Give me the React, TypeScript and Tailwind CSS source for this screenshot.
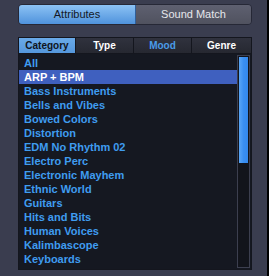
import React from "react";

const items = [
  "All",
  "ARP + BPM",
  "Bass Instruments",
  "Bells and Vibes",
  "Bowed Colors",
  "Distortion",
  "EDM No Rhythm 02",
  "Electro Perc",
  "Electronic Mayhem",
  "Ethnic World",
  "Guitars",
  "Hits and Bits",
  "Human Voices",
  "Kalimbascope",
  "Keyboards",
];

export default function App() {
  return (
    <div
      className="w-[269px] h-[276px] bg-[#3a3d4f] flex overflow-hidden"
      style={{ fontFamily: '"Liberation Sans", Arial, sans-serif' }}
    >
      <div className="w-[267px] h-full flex flex-col">
        {/* segmented control */}
        <div className="mt-[4px] ml-[18px] w-[234px] h-[21px] rounded-[4px] border border-[#262836] flex overflow-hidden">
          <div className="w-[117px] h-full bg-gradient-to-b from-[#8cc2f4] to-[#4f93dc] border-r border-[#2f5f9a] flex items-center justify-center text-[11px] text-[#141826]">
            Attributes
          </div>
          <div className="flex-1 h-full bg-gradient-to-b from-[#5e6070] to-[#50525f] flex items-center justify-center text-[11px] text-[#e6e7ec]">
            Sound Match
          </div>
        </div>

        {/* panel */}
        <div className="mt-[12px] ml-[18px] w-[234px] h-[233px] border border-[#14161e] bg-[#151821] flex flex-col">
          <div className="h-[16px] flex border-b border-[#14161e]">
            <div className="w-[57px] h-full bg-gradient-to-b from-[#6aaae8] to-[#5597dc] flex items-center justify-center text-[10px] font-bold text-[#0f1420] border-r border-[#14161e]">
              Category
            </div>
            <div className="w-[58px] h-full bg-gradient-to-b from-[#30323e] to-[#262831] flex items-center justify-center text-[10px] font-bold text-white border-r border-[#14161e]">
              Type
            </div>
            <div className="w-[58px] h-full bg-gradient-to-b from-[#30323e] to-[#262831] flex items-center justify-center text-[10px] font-bold text-[#4a9ce8] border-r border-[#14161e]">
              Mood
            </div>
            <div className="flex-1 h-full bg-gradient-to-b from-[#30323e] to-[#262831] flex items-center justify-center text-[10px] font-bold text-white">
              Genre
            </div>
          </div>
          <div className="flex-1 flex">
            <div className="w-[218px] pt-[2px] flex flex-col">
              {items.map((it, i) => (
                <div
                  key={it}
                  className={
                    i === 1
                      ? "h-[14px] pl-[5px] flex items-center text-[11px] font-bold text-white bg-[#3f60bf]"
                      : "h-[14px] pl-[5px] flex items-center text-[11px] font-bold text-[#3f9cf0]"
                  }
                >
                  {it}
                </div>
              ))}
            </div>
            <div className="ml-[0px] mt-[1px] mb-[1px] w-[13px] border border-[#3c3f4f] bg-[#12141b] flex justify-center">
              <div className="mt-[1px] w-[9px] h-[106px] bg-gradient-to-r from-[#5aa6f6] via-[#3a8ff2] to-[#3388ee]" />
            </div>
          </div>
        </div>
      </div>
      <div className="w-[2px] h-full bg-black" />
    </div>
  );
}
